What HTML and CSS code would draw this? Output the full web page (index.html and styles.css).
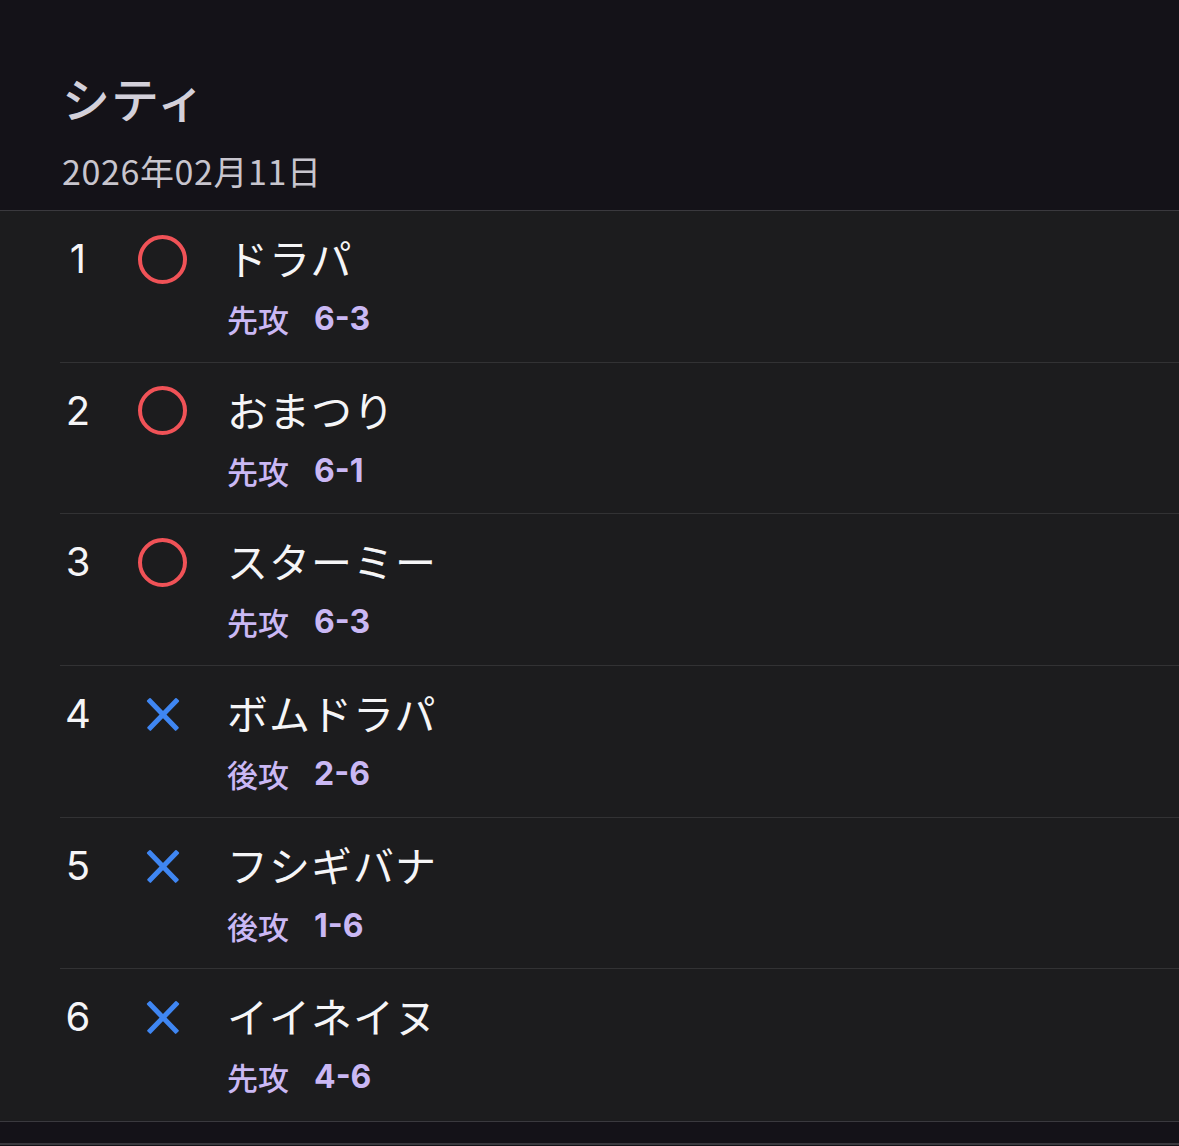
FILE: index.html
```html
<!DOCTYPE html>
<html lang="ja">

<head>
    <meta charset="UTF-8">
    <meta name="viewport" content="width=device-width, initial-scale=1.0">
    <title>シティ</title>
    <link rel="stylesheet" href="styles.css">
</head>

<body>
    <header class="cabecalho">
        <h1 class="titulo">シティ</h1>
        <p class="data">2026年02月11日</p>
    </header>
    <ul class="lista">
        <li class="partida">
            <span class="numero">1</span>
            <span class="resultado"><span class="vitoria"></span></span>
            <div class="info">
                <span class="nome">ドラパ</span>
                <span class="detalhe">先攻<b>6-3</b></span>
            </div>
        </li>
        <li class="partida">
            <span class="numero">2</span>
            <span class="resultado"><span class="vitoria"></span></span>
            <div class="info">
                <span class="nome">おまつり</span>
                <span class="detalhe">先攻<b>6-1</b></span>
            </div>
        </li>
        <li class="partida">
            <span class="numero">3</span>
            <span class="resultado"><span class="vitoria"></span></span>
            <div class="info">
                <span class="nome">スターミー</span>
                <span class="detalhe">先攻<b>6-3</b></span>
            </div>
        </li>
        <li class="partida">
            <span class="numero">4</span>
            <span class="resultado"><span class="derrota"></span></span>
            <div class="info">
                <span class="nome">ボムドラパ</span>
                <span class="detalhe">後攻<b>2-6</b></span>
            </div>
        </li>
        <li class="partida">
            <span class="numero">5</span>
            <span class="resultado"><span class="derrota"></span></span>
            <div class="info">
                <span class="nome">フシギバナ</span>
                <span class="detalhe">後攻<b>1-6</b></span>
            </div>
        </li>
        <li class="partida">
            <span class="numero">6</span>
            <span class="resultado"><span class="derrota"></span></span>
            <div class="info">
                <span class="nome">イイネイヌ</span>
                <span class="detalhe">先攻<b>4-6</b></span>
            </div>
        </li>
    </ul>
    <div class="rodape"></div>
</body>

</html>
```

FILE: styles.css
```css
* {
    box-sizing: border-box;
}

body {
    margin: 0;
    background-color: #141218;
    font-family: Inter, "Noto Sans CJK JP", sans-serif;
    color: #f5f5f7;
}

.cabecalho {
    padding: 73px 0 17px 62px;
    display: flex;
    flex-direction: column;
    gap: 20px;
    border-bottom: 1px solid #3a393e;
}

.titulo {
    margin: 0;
    font-size: 48px;
    line-height: 56px;
    font-weight: 500;
    letter-spacing: 1px;
    color: #d3d0da;
}

.data {
    margin: 0;
    font-size: 34px;
    line-height: 44px;
    letter-spacing: 0.6px;
    color: #c8c5ce;
    font-family: "Noto Sans CJK JP", sans-serif;
}

.lista {
    list-style: none;
    margin: 0;
    padding: 0;
    background-color: #1c1c1e;
    border-bottom: 1px solid #3a393e;
}

.partida {
    margin-left: 60px;
    height: 151.7px;
    padding-top: 20px;
    display: grid;
    grid-template-columns: 36px 133px 1fr;
    align-items: start;
    border-bottom: 1px solid #323234;
}

.partida:last-child {
    border-bottom: 0;
}

.numero {
    font-size: 40px;
    line-height: 56px;
    text-align: center;
    font-weight: 400;
}

.resultado {
    height: 56px;
    display: flex;
    justify-content: center;
    align-items: center;
}

.vitoria {
    width: 49px;
    height: 49px;
    border-radius: 50%;
    border: 4.5px solid #f05257;
}

.derrota {
    width: 34px;
    height: 36px;
    position: relative;
}

.derrota::before,
.derrota::after {
    content: '';
    position: absolute;
    left: -4px;
    top: 16px;
    width: 42px;
    height: 4.5px;
    border-radius: 1px;
    background-color: #3f86f2;
    transform: rotate(46deg);
}

.derrota::after {
    transform: rotate(-46deg);
}

.info {
    display: flex;
    flex-direction: column;
    gap: 16px;
}

.nome {
    font-family: "Noto Sans CJK JP", sans-serif;
    font-size: 41px;
    line-height: 52px;
    letter-spacing: 1px;
    margin-left: -2px;
}

.detalhe {
    font-family: "Noto Sans CJK JP", sans-serif;
    font-size: 31px;
    line-height: 40px;
    font-weight: 500;
    color: #cab8f4;
    display: flex;
    gap: 25px;
    margin-left: -2px;
}

.detalhe b {
    font-family: Inter, sans-serif;
    font-weight: 700;
    font-size: 32px;
}

.rodape {
    height: 23px;
    border-bottom: 2px solid #3a393e;
}
```
